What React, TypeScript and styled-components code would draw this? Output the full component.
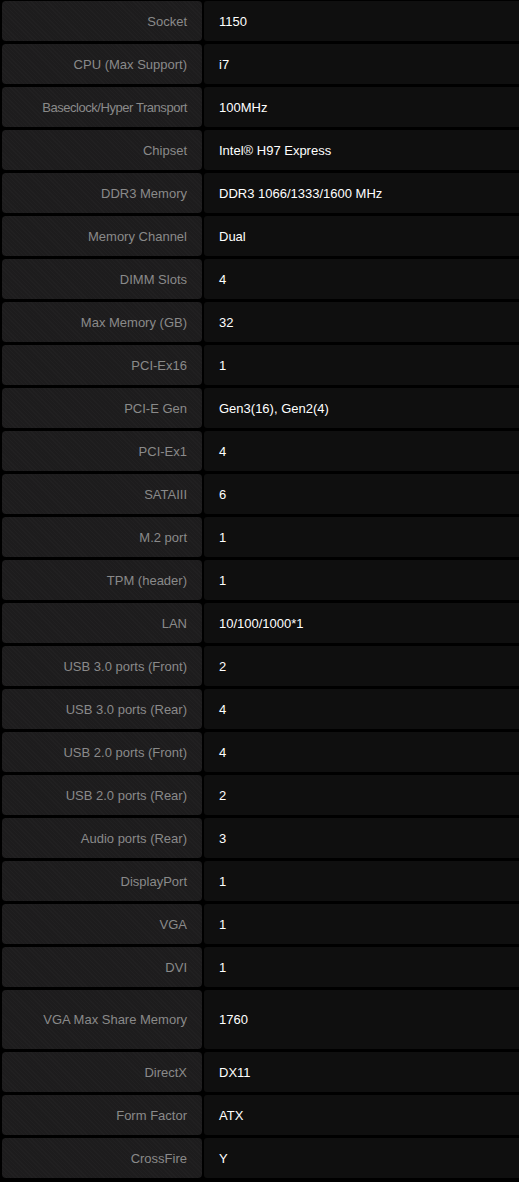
import React from "react";
import styled, { createGlobalStyle } from "styled-components";

const Global = createGlobalStyle`
  html, body {
    margin: 0;
    padding: 0;
    background: #000;
  }
  body {
    font-family: "Liberation Sans", Arial, sans-serif;
  }
`;

const Table = styled.div`
  display: flex;
  flex-direction: column;
  gap: 3px;
  padding: 1px 0 4px 2px;
  width: 519px;
  box-sizing: border-box;
  overflow: hidden;
`;

const Row = styled.div<{ $tall?: boolean }>`
  display: grid;
  grid-template-columns: 200px 1fr;
  column-gap: 2px;
  height: ${(p) => (p.$tall ? "59px" : "40px")};
`;

const Label = styled.div<{ $tight?: boolean }>`
  display: flex;
  align-items: center;
  justify-content: flex-end;
  padding-right: 15px;
  border-radius: 4px;
  background-color: #1e1d1e;
  background-image: repeating-linear-gradient(
    45deg,
    rgba(255, 255, 255, 0.01) 0px,
    rgba(255, 255, 255, 0.01) 1px,
    rgba(0, 0, 0, 0.03) 1px,
    rgba(0, 0, 0, 0.03) 3px
  );
  color: #8a8a8a;
  font-size: 13px;
  letter-spacing: ${(p) => (p.$tight ? "-0.45px" : "normal")};
  white-space: nowrap;
`;

const Value = styled.div`
  display: flex;
  align-items: center;
  padding-left: 15px;
  border-radius: 3px 0 0 3px;
  background: #0f0f0f;
  color: #ffffff;
  font-size: 13px;
  white-space: nowrap;
`;

type Spec = { label: string; value: string; tall?: boolean; tight?: boolean };

const specs: Spec[] = [
  { label: "Socket", value: "1150" },
  { label: "CPU (Max Support)", value: "i7" },
  { label: "Baseclock/Hyper Transport", value: "100MHz", tight: true },
  { label: "Chipset", value: "Intel® H97 Express" },
  { label: "DDR3 Memory", value: "DDR3 1066/1333/1600 MHz" },
  { label: "Memory Channel", value: "Dual" },
  { label: "DIMM Slots", value: "4" },
  { label: "Max Memory (GB)", value: "32" },
  { label: "PCI-Ex16", value: "1" },
  { label: "PCI-E Gen", value: "Gen3(16), Gen2(4)" },
  { label: "PCI-Ex1", value: "4" },
  { label: "SATAIII", value: "6" },
  { label: "M.2 port", value: "1" },
  { label: "TPM (header)", value: "1" },
  { label: "LAN", value: "10/100/1000*1" },
  { label: "USB 3.0 ports (Front)", value: "2" },
  { label: "USB 3.0 ports (Rear)", value: "4" },
  { label: "USB 2.0 ports (Front)", value: "4" },
  { label: "USB 2.0 ports (Rear)", value: "2" },
  { label: "Audio ports (Rear)", value: "3" },
  { label: "DisplayPort", value: "1" },
  { label: "VGA", value: "1" },
  { label: "DVI", value: "1" },
  { label: "VGA Max Share Memory", value: "1760", tall: true },
  { label: "DirectX", value: "DX11" },
  { label: "Form Factor", value: "ATX" },
  { label: "CrossFire", value: "Y" },
];

export default function App() {
  return (
    <>
      <Global />
      <Table>
        {specs.map((s) => (
          <Row key={s.label} $tall={s.tall}>
            <Label $tight={s.tight}>{s.label}</Label>
            <Value>{s.value}</Value>
          </Row>
        ))}
      </Table>
    </>
  );
}
